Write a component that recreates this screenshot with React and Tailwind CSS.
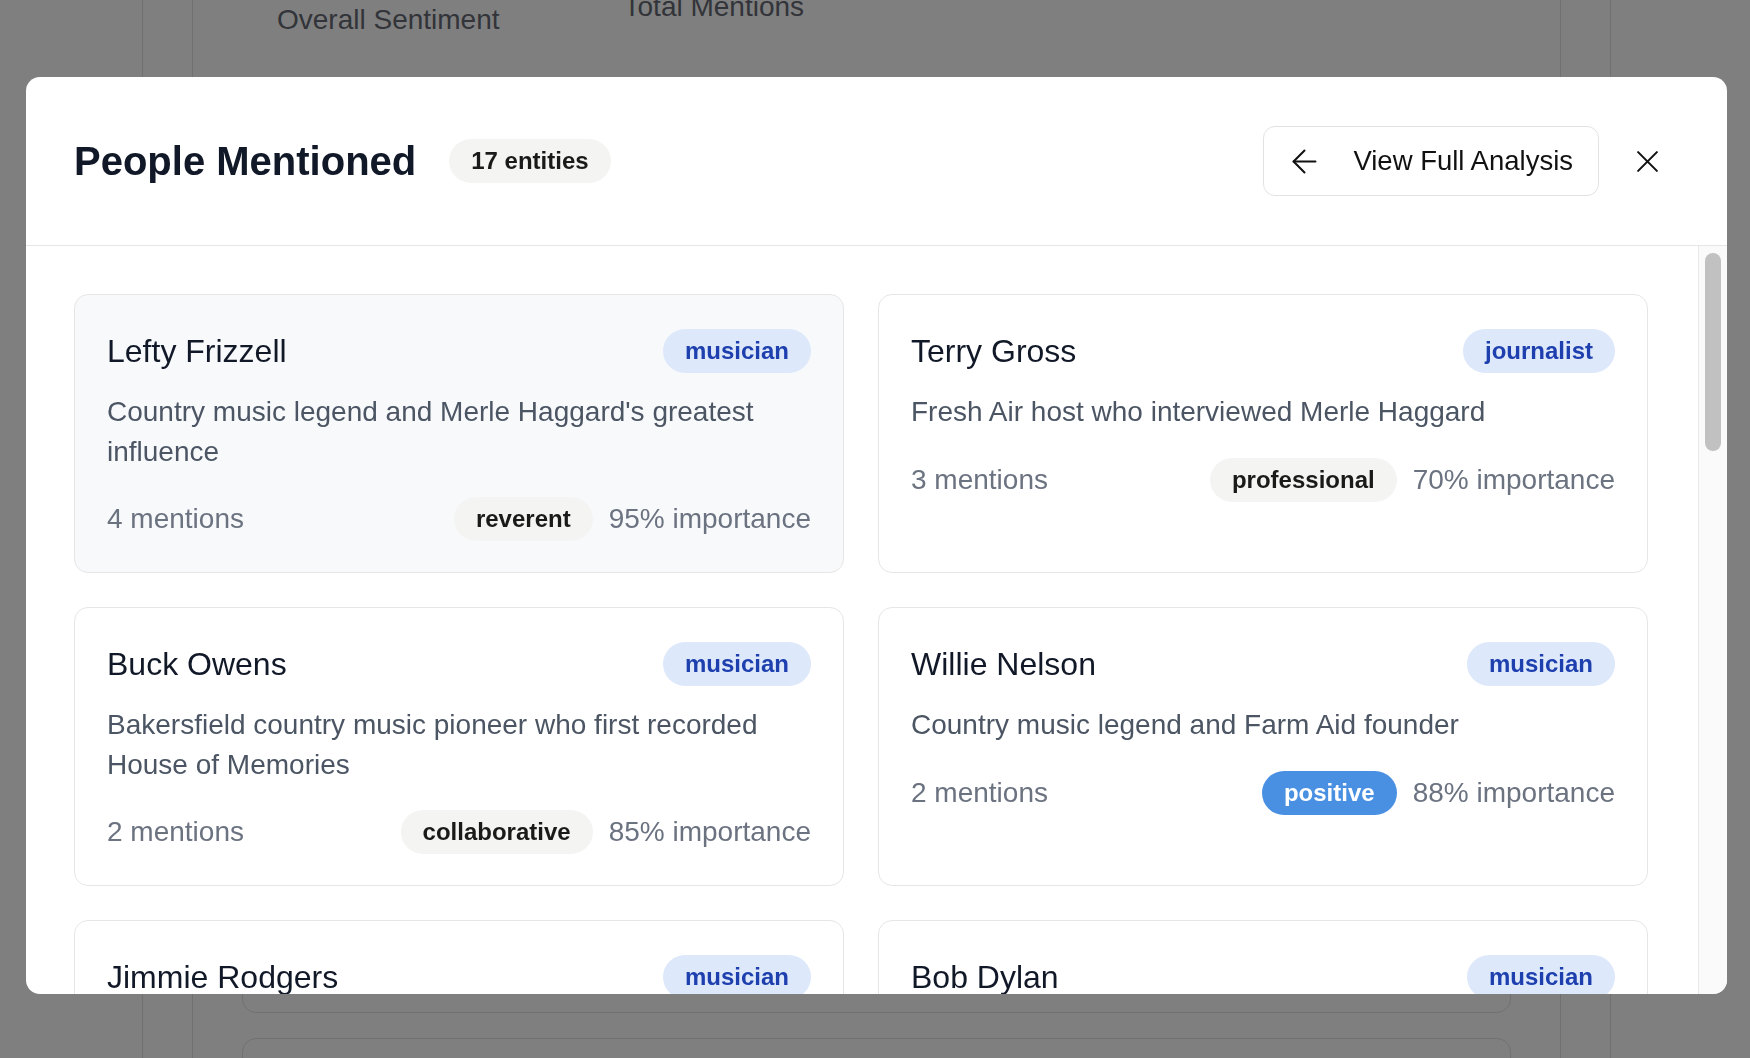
import { useState } from "react";

const people = [
  { name: "Lefty Frizzell", type: "musician", desc: "Country music legend and Merle Haggard's greatest influence", mentions: 4, sentiment: "reverent", importance: 95 },
  { name: "Terry Gross", type: "journalist", desc: "Fresh Air host who interviewed Merle Haggard", mentions: 3, sentiment: "professional", importance: 70 },
  { name: "Buck Owens", type: "musician", desc: "Bakersfield country music pioneer who first recorded House of Memories", mentions: 2, sentiment: "collaborative", importance: 85 },
  { name: "Willie Nelson", type: "musician", desc: "Country music legend and Farm Aid founder", mentions: 2, sentiment: "positive", importance: 88 },
  { name: "Jimmie Rodgers", type: "musician", desc: "Early country star Haggard admired as a boy", mentions: 2, sentiment: "reverent", importance: 80 },
  { name: "Bob Dylan", type: "musician", desc: "Folk icon who praised Haggard's songwriting", mentions: 1, sentiment: "positive", importance: 60 },
  { name: "Johnny Cash", type: "musician", desc: "Country legend whose San Quentin prison concert inspired a young Haggard", mentions: 2, sentiment: "admiring", importance: 78 },
  { name: "Bonnie Owens", type: "musician", desc: "Singer and former wife who sang harmony in Haggard's touring band for years", mentions: 1, sentiment: "affectionate", importance: 65 },
  { name: "Hank Williams", type: "musician", desc: "Honky-tonk pioneer and early influence", mentions: 1, sentiment: "reverent", importance: 62 },
  { name: "Bob Wills", type: "musician", desc: "Western swing bandleader Haggard honored", mentions: 1, sentiment: "reverent", importance: 58 },
  { name: "Dolly Parton", type: "musician", desc: "Country superstar who recorded duets and toured alongside Haggard in later years", mentions: 1, sentiment: "positive", importance: 50 },
  { name: "George Jones", type: "musician", desc: "Fellow country great and duet partner on the album A Taste of Yesterday's Wine", mentions: 1, sentiment: "collaborative", importance: 55 },
  { name: "Tammy Wynette", type: "musician", desc: "Country singer who covered Haggard's songs", mentions: 1, sentiment: "neutral", importance: 40 },
  { name: "Ronald Reagan", type: "politician", desc: "California governor who pardoned Haggard", mentions: 1, sentiment: "neutral", importance: 45 },
  { name: "Woody Guthrie", type: "musician", desc: "Folk singer whose Dust Bowl songs shaped him", mentions: 1, sentiment: "admiring", importance: 48 },
  { name: "Elvis Presley", type: "musician", desc: "Rock and roll icon mentioned in passing", mentions: 1, sentiment: "neutral", importance: 30 },
  { name: "Ben Haggard", type: "family", desc: "Merle Haggard's son and guitarist in his band", mentions: 1, sentiment: "affectionate", importance: 42 },
];

function ArrowLeft() {
  return (
    <svg width="25" height="25" viewBox="4 4 16 16" fill="none" stroke="currentColor" strokeWidth="1.3" strokeLinecap="round" strokeLinejoin="round" className="overflow-visible">
      <path d="m12 19-7-7 7-7" />
      <path d="M19 12H5" />
    </svg>
  );
}

function CloseIcon() {
  return (
    <svg width="25" height="25" viewBox="4 4 16 16" fill="none" stroke="currentColor" strokeWidth="1.35" strokeLinecap="round" className="overflow-visible">
      <path d="M18 6 6 18" />
      <path d="m6 6 12 12" />
    </svg>
  );
}

function PersonCard({ p, hovered }) {
  return (
    <div className={"rounded-[14px] border border-[#e6e6e6] px-8 pb-[31px] pt-[34px] " + (hovered ? "bg-[#f8f9fb]" : "bg-white")}>
      <div className="flex items-center justify-between">
        <div className="text-[32px] leading-[44px] text-[#111827]">{p.name}</div>
        <span className="flex h-[44px] items-center rounded-full bg-[#dde8fb] px-[22px] text-[24px] font-bold text-[#1e40af]">
          {p.type}
        </span>
      </div>
      <p className="mt-[19px] text-[28px] leading-[39.5px] text-[#4b5563]">{p.desc}</p>
      <div className="mt-[26px] flex items-center justify-between text-[28px] text-[#6b7280]">
        <span>{p.mentions} mentions</span>
        <div className="flex items-center gap-4">
          {p.sentiment === "positive" ? (
            <span className="flex h-[44px] items-center rounded-full bg-[#4a90e2] px-[22px] text-[24px] font-bold text-white">
              {p.sentiment}
            </span>
          ) : (
            <span className="flex h-[44px] items-center rounded-full bg-[#f4f4f2] px-[22px] text-[24px] font-bold text-[#1a1a1a]">
              {p.sentiment}
            </span>
          )}
          <span>{p.importance}% importance</span>
        </div>
      </div>
    </div>
  );
}

export default function App() {
  const [hover] = useState(0);

  return (
    <div className="relative h-screen overflow-hidden bg-white font-['Liberation_Sans',Arial,sans-serif]">
      {/* page behind the dialog */}
      <div className="h-full pl-[142px] pr-[139px]">
        <div className="h-full border-x border-[#e2e2e2] px-[49px]">
          <div className="flex h-full flex-col border-x border-[#e2e2e2] px-[49px]">
            <div className="flex items-start text-[28px] leading-[28px] text-[#646973]">
              <span className="ml-[35px] mt-[6px]">Overall Sentiment</span>
              <span className="-mt-[7px] ml-[124px]">Total Mentions</span>
            </div>
            <div className="flex-1" />
            <div className="h-[140px] shrink-0 rounded-[14px] border border-[#e2e2e2]" />
            <div className="-mb-[60px] mt-[25px] h-[80px] shrink-0 rounded-[14px] border border-[#e2e2e2]" />
          </div>
        </div>
      </div>

      {/* overlay */}
      <div className="fixed inset-0 bg-[rgba(0,0,0,0.5)] pl-[26px] pt-[77px]">
        <div className="flex h-[917px] w-[1701px] flex-col overflow-hidden rounded-[14px] bg-white">
          <div className="flex h-[169px] shrink-0 items-center border-b border-[#e6e6e6] pl-12 pr-[67px]">
            <h2 className="text-[40px] font-bold leading-none text-[#111827]">People Mentioned</h2>
            <span className="ml-[33px] flex h-[44px] items-center rounded-full bg-[#f4f4f2] px-[22px] text-[24px] font-bold text-[#1a1a1a]">
              17 entities
            </span>
            <div className="flex-1" />
            <button className="flex h-[70px] items-center rounded-[12px] border border-[#e2e2e2] bg-white pl-[28px] pr-[25px] text-[#111]">
              <ArrowLeft />
              <span className="ml-[36px] text-[27.5px]">View Full Analysis</span>
            </button>
            <button className="ml-[36px] text-[#111]">
              <CloseIcon />
            </button>
          </div>

          <div className="flex min-h-0 flex-1">
            <div className="min-w-0 flex-1 overflow-hidden">
              <div className="grid grid-cols-2 gap-[34px] pb-12 pl-12 pr-[50px] pt-12">
                {people.map((p, i) => (
                  <PersonCard key={p.name} p={p} hovered={i === hover} />
                ))}
              </div>
            </div>
            {/* scrollbar */}
            <div className="w-[29px] shrink-0 border-l border-[#e8e8e8] bg-[#fafafa] px-[6px] pt-[7px]">
              <div className="h-[198px] rounded-full bg-[#c1c1c1]" />
            </div>
          </div>
        </div>
      </div>
    </div>
  );
}
